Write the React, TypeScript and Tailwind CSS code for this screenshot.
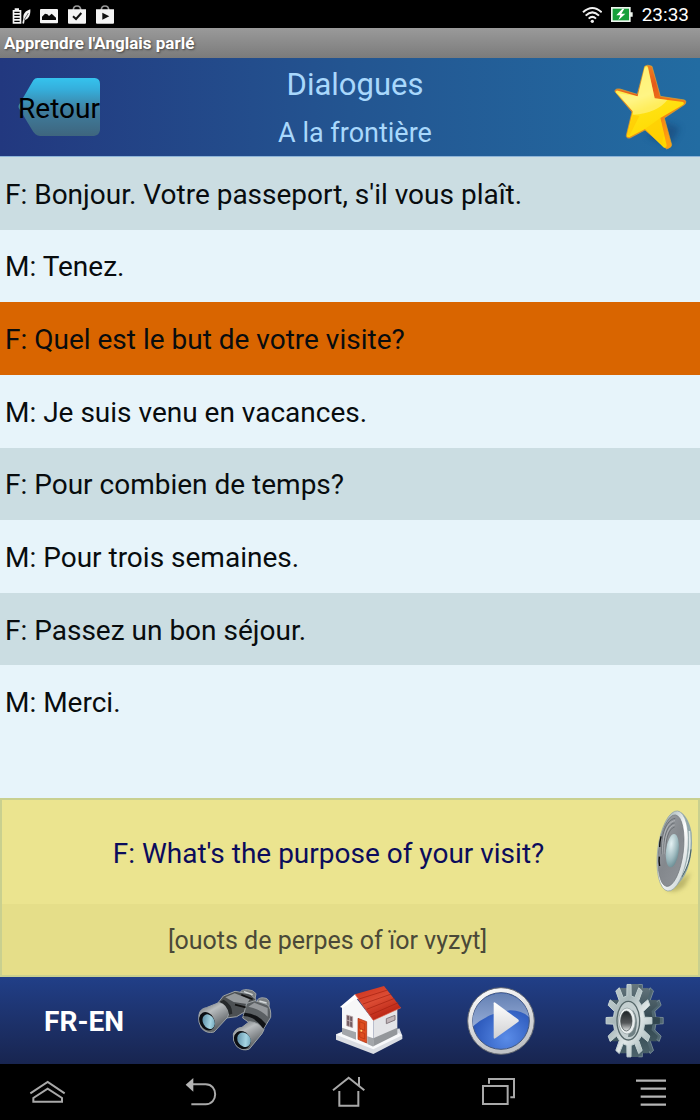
import React, { useState } from "react";

type Line = { source: string; target: string; phonetic: string };

const lines: Line[] = [
  { source: "F: Bonjour. Votre passeport, s'il vous plaît.", target: "F: Hello. Your passport, please.", phonetic: "" },
  { source: "M: Tenez.", target: "M: Here you are.", phonetic: "" },
  {
    source: "F: Quel est le but de votre visite?",
    target: "F: What's the purpose of your visit?",
    phonetic: "[ouots de perpes of ïor vyzyt]",
  },
  { source: "M: Je suis venu en vacances.", target: "M: I'm here on holiday.", phonetic: "" },
  { source: "F: Pour combien de temps?", target: "F: For how long?", phonetic: "" },
  { source: "M: Pour trois semaines.", target: "M: For three weeks.", phonetic: "" },
  { source: "F: Passez un bon séjour.", target: "F: Enjoy your stay.", phonetic: "" },
  { source: "M: Merci.", target: "M: Thank you.", phonetic: "" },
];

function gearPath(cx: number, cy: number) {
  const points: string[] = [];
  const add = (deg: number, rx: number, ry: number) => {
    const a = (deg * Math.PI) / 180;
    points.push(`${(cx + rx * Math.cos(a)).toFixed(1)} ${(cy + ry * Math.sin(a)).toFixed(1)}`);
  };
  for (let i = 0; i < 12; i++) {
    const a = i * 30;
    add(a - 8, 47, 75);
    add(a - 5, 69, 109);
    add(a + 5, 69, 109);
    add(a + 8, 47, 75);
  }
  return `M${points.join("L")}Z`;
}

function StatusBar() {
  return (
    <div className="flex h-7 items-center justify-between bg-black pr-[11px] pl-[11px] text-white">
      <div className="flex items-center gap-2 pt-px">
        <svg className="size-5" viewBox="33 12 60 60" aria-hidden="true">
          <path d="M44 22h13v5h7v41H38V27h6z" fill="#f4f4f4" />
          <path d="M43 34h16M43 43h16M43 52h16M43 61h16" stroke="#000" strokeWidth="4" />
          <path d="M91 25c-15 5-22 13-21 27l-3 15 5 1 2-11c13-3 18-15 17-32z" fill="#f4f4f4" />
          <path d="M85 36 72 57" stroke="#222" strokeWidth="2" />
        </svg>
        <svg className="size-5" viewBox="117 12 60 60" aria-hidden="true">
          <rect x="120" y="24" width="54" height="43" rx="3" fill="#f4f4f4" />
          <path d="M126 57V47l9-9 7 2 5 5 8-7 13 12v7z" fill="#080808" />
        </svg>
        <svg className="size-5" viewBox="201 12 60 60" aria-hidden="true">
          <path d="M220 27c0-16 22-16 22 0" fill="none" stroke="#999" strokeWidth="5" />
          <path d="M204 25h54v40q0 3-3 3h-48q-3 0-3-3z" fill="#f4f4f4" />
          <path d="m219 46 9 8 16-18" fill="none" stroke="#111" strokeWidth="6" />
        </svg>
        <svg className="size-5" viewBox="285 12 60 60" aria-hidden="true">
          <path d="M304 27c0-16 22-16 22 0" fill="none" stroke="#999" strokeWidth="5" />
          <path d="M288 25h54v40q0 3-3 3h-48q-3 0-3-3z" fill="#f4f4f4" />
          <path d="m307 35 21 11-21 10z" fill="#111" />
        </svg>
      </div>
      <div className="flex items-center gap-[9px]">
        <svg className="size-5" viewBox="66 12 60 60" fill="none" stroke="#f0f0f0" strokeWidth="6" aria-hidden="true">
          <path d="M69 37q28-26 56 0M77 47q20-20 40 0M86 56q11-11 22 0" />
          <circle cx="97" cy="64" r="5" fill="#f0f0f0" stroke="none" />
        </svg>
        <svg className="h-5 w-[22px]" viewBox="156 12 66 60" aria-hidden="true">
          <path d="M156 21h59v16h6v13h-6v16h-59z" fill="#eef5ee" />
          <path d="M161 26h49v35h-49z" fill="#16a03b" />
          <path d="m190 26-18 20h12l-6 15 21-20h-12l9-15z" fill="#fff" />
        </svg>
        <time className="text-[19px] leading-none">23:33</time>
      </div>
    </div>
  );
}

function Star() {
  return (
    <svg className="h-[92px] w-20" viewBox="60 15 240 276" aria-hidden="true">
      <defs>
        <linearGradient id="starFace" x1="0" y1="0" x2="0.3" y2="1">
          <stop offset="0" stopColor="#ffe838" />
          <stop offset="0.45" stopColor="#fff05a" />
          <stop offset="0.6" stopColor="#ffe212" />
          <stop offset="1" stopColor="#ffd800" />
        </linearGradient>
        <linearGradient id="starSide" x1="0" y1="0" x2="0.5" y2="1">
          <stop offset="0" stopColor="#f9a52a" />
          <stop offset="0.4" stopColor="#e55a1a" />
          <stop offset="1" stopColor="#ffa010" />
        </linearGradient>
        <filter id="starBlur" x="-30%" y="-30%" width="160%" height="160%">
          <feGaussianBlur stdDeviation="9" />
        </filter>
      </defs>
      <path d="M215 195 270 215 255 245 235 270 170 240z" fill="#123f70" opacity="0.5" filter="url(#starBlur)" />
      <path
        d="M164 31Q172 24 186 31L211 121 284 132Q291 136 285 145L223 186 245 266Q246 274 230 279L165 222 120 246Q108 248 109 238L126 168 75 107Q73 97 90 99L142 115z"
        fill="url(#starSide)"
        stroke="#d9a830"
        strokeWidth="2"
        strokeLinejoin="round"
      />
      <path
        d="M164 33Q171 27 174 34L194 127 279 138Q285 142 278 147L211 186 230 268Q229 279 220 274L165 219 119 243Q109 245 111 236L128 166 77 109Q76 103 84 104L143 121z"
        fill="url(#starFace)"
      />
      <path d="M143 121 164 36Q171 30 174 38L194 127 232 132Q200 172 130 176L128 166 84 112z" fill="#fffbb8" opacity="0.45" />
      <path d="M165 219 211 186 222 238Q215 255 218 268z" fill="#ffc800" opacity="0.5" />
      <path d="M111 236 128 176 148 180 119 238z" fill="#ffc400" opacity="0.5" />
    </svg>
  );
}

function Header() {
  return (
    <header className="flex h-[99px] items-center justify-between border-b border-[#8db4d8] bg-linear-to-r from-[#22387f] via-[#235591] to-[#226ca2] pr-[10px] pl-[18px]">
      <button type="button" className="relative flex h-[58px] w-[82px] items-center justify-center pt-1 text-[28px] text-black">
        <svg className="absolute inset-0 size-full" viewBox="54 66 246 174" aria-hidden="true">
          <defs>
            <linearGradient id="backFill" x1="0" y1="0" x2="0" y2="1">
              <stop offset="0" stopColor="#35c3ee" />
              <stop offset="0.2" stopColor="#35aedb" />
              <stop offset="0.55" stopColor="#3f7e9e" />
              <stop offset="1" stopColor="#3e657e" />
            </linearGradient>
          </defs>
          <path d="M112 66H284q16 2 16 18V222q-2 16-18 18H120q-15-1-24-19L56 155q-2-5 2-10L100 73q5-7 12-7z" fill="url(#backFill)" />
        </svg>
        <span className="relative">Retour</span>
      </button>
      <div className="pt-1 text-center text-[#a9d8fc]">
        <h1 className="text-[31px] leading-[49px]">Dialogues</h1>
        <h2 className="text-[27px] leading-[49px]">A la frontière</h2>
      </div>
      <button type="button" aria-label="Favori">
        <Star />
      </button>
    </header>
  );
}

function Speaker() {
  return (
    <svg className="h-[93px] w-10" viewBox="75 45 120 279" aria-hidden="true">
      <defs>
        <linearGradient id="rim" x1="0" y1="0" x2="1" y2="1">
          <stop offset="0" stopColor="#8fa3a5" />
          <stop offset="0.5" stopColor="#ffffff" />
          <stop offset="1" stopColor="#c4cfd0" />
        </linearGradient>
        <linearGradient id="cone" x1="0" y1="0" x2="1" y2="1">
          <stop offset="0" stopColor="#9da1a5" />
          <stop offset="0.5" stopColor="#84888d" />
          <stop offset="1" stopColor="#8f9398" />
        </linearGradient>
        <radialGradient id="dome" cx="0.35" cy="0.3" r="0.8">
          <stop offset="0" stopColor="#e4f1f3" />
          <stop offset="0.6" stopColor="#9db9be" />
          <stop offset="1" stopColor="#64888f" />
        </radialGradient>
        <filter id="speakerBlur" x="-30%" y="-30%" width="160%" height="160%">
          <feGaussianBlur stdDeviation="6" />
        </filter>
      </defs>
      <path d="M105 290q25 25 60-5l18-40z" fill="#8e8947" opacity="0.5" filter="url(#speakerBlur)" />
      <path d="M145 60q30 12 40 65 5 60-12 108-14 38-45 60l-10-10z" fill="#93a9ab" />
      <path d="M178 120q6 60-10 108l-12 22" fill="none" stroke="#dce6e6" strokeWidth="5" />
      <path d="M183 175q-3 45-28 83" fill="none" stroke="#476064" strokeWidth="3" />
      <ellipse cx="128" cy="180" rx="45" ry="121" fill="url(#rim)" stroke="#8ea1a3" strokeWidth="2" transform="rotate(7 128 180)" />
      <ellipse cx="123" cy="179" rx="37" ry="108" fill="url(#cone)" stroke="#70757a" strokeWidth="2" transform="rotate(7 123 179)" />
      <path d="M96 190C90 130 110 85 136 82M102 192C98 140 112 98 134 96M108 190C104 150 116 112 134 108" fill="none" stroke="#5b6065" strokeWidth="2" />
      <path d="M99 191C94 135 111 92 135 89M105 191C101 145 114 105 134 102" fill="none" stroke="#bfc2c5" strokeWidth="2" />
      <path d="M89 168q0-16 4-32M89 225q-3-16-1-28" stroke="#111" strokeWidth="4" fill="none" />
      <ellipse cx="127" cy="179" rx="19" ry="50" fill="url(#dome)" transform="rotate(7 127 179)" />
    </svg>
  );
}

function Binoculars() {
  return (
    <svg className="h-[67px] w-20" viewBox="45 35 240 201" aria-hidden="true">
      <defs>
        <linearGradient id="barrel" x1="0.2" y1="0" x2="0.8" y2="1">
          <stop offset="0" stopColor="#6a6e71" />
          <stop offset="0.3" stopColor="#b9bdbf" />
          <stop offset="0.6" stopColor="#85898c" />
          <stop offset="1" stopColor="#3c4043" />
        </linearGradient>
        <linearGradient id="lens" x1="0" y1="0" x2="1" y2="1">
          <stop offset="0" stopColor="#4d7f99" />
          <stop offset="0.6" stopColor="#a5d4e2" />
          <stop offset="1" stopColor="#5b90a8" />
        </linearGradient>
      </defs>
      <g stroke="#9da3a6" strokeWidth="3" strokeLinejoin="round">
        <path d="M180 52q4-10 22-9 18 0 26 12l-4 22-30-4zM232 74q8-10 26-5 14 6 8 28l-30-6z" fill="#7a7f82" />
        <path d="M112 85 130 62 165 48l45 8 18 16-10 26-28 14-20 12-30 4z" fill="#4c5053" />
        <path d="M200 84 225 76 262 88q12 10 10 38l-22 36-42-20-20-14z" fill="#5b6063" />
        <path d="M57 118q3-18 22-21l40-16q24 6 28 32l-5 14-40 43q-22 6-38-12-11-17-7-40z" fill="url(#barrel)" />
        <path d="M160 176q6-18 26-20l22-17q30 2 44 24l-6 12-38 46q-20 8-38-8-13-16-10-37z" fill="url(#barrel)" />
      </g>
      <path d="M118 80q25 8 29 38l10-3q0-28-26-42z" fill="#26292b" />
      <path d="M190 122q34 0 60 38l8-14q-22-30-64-34z" fill="#111315" />
      <path d="m136 66 28-12 45 18-8 14-40-6zM205 94l18-12 40 16v26q-22-22-58-30z" fill="#95999c" />
      <path d="m184 58 34 14M165 88l32 8" stroke="#111" strokeWidth="5" />
      <path d="m192 49 26 9M238 77l22 6" stroke="#d4d9da" strokeWidth="4" />
      <ellipse cx="81" cy="138" rx="22" ry="29" fill="#0b0e12" transform="rotate(-28 81 138)" />
      <ellipse cx="86" cy="139" rx="17" ry="23" fill="url(#lens)" transform="rotate(-28 86 139)" />
      <ellipse cx="187" cy="194" rx="24" ry="28" fill="#0b0e12" transform="rotate(-35 187 194)" />
      <ellipse cx="192" cy="193" rx="19" ry="23" fill="url(#lens)" transform="rotate(-35 192 193)" />
    </svg>
  );
}

function House() {
  return (
    <svg className="h-[71px] w-[72px]" viewBox="36 30 216 213" aria-hidden="true">
      <defs>
        <linearGradient id="roof" x1="0" y1="0" x2="0.6" y2="1">
          <stop offset="0" stopColor="#c9301b" />
          <stop offset="0.5" stopColor="#dc4c34" />
          <stop offset="1" stopColor="#b41f10" />
        </linearGradient>
      </defs>
      <path d="M48 178 66 170 160 195 238 160 247 182 247 192 160 237 48 194z" fill="#dadde3" />
      <path d="M48 179 66 172 160 212 236 174 247 181 160 223z" fill="#f8f9fb" />
      <path d="M66 96 106 66 160 136V214L66 177z" fill="#f7f7f8" />
      <path d="M160 134 232 100V178L160 214z" fill="#e3e4e7" />
      <path d="M66 158 108 172V194L66 177zM142 184l18 6v25l-18-8z" fill="#a3a6aa" />
      <path d="M160 190 232 158V178L160 214z" fill="#94979b" />
      <path d="M60 96 106 57 120 72 106 72 68 99z" fill="#fff" />
      <path d="M105 58 192 33 243 98 160 136z" fill="url(#roof)" />
      <path d="m117 72 86-27M129 87l85-30M140 103l84-33M150 120l85-37" stroke="#a3200f" strokeWidth="2" fill="none" />
      <path d="M105 58 160 136 243 98" fill="none" stroke="#e2654b" strokeWidth="2" />
      <path d="M80 120 98 125V158L80 152z" fill="#735c62" stroke="#bba8ab" strokeWidth="2" />
      <path d="M89 123v32M80 135l18 6" stroke="#d6c9cc" strokeWidth="2" />
      <path d="M114 130 140 140V204L114 193z" fill="#df4d20" stroke="#a72c0c" strokeWidth="2" />
      <path d="m119 140 15 6v20l-15-6zM119 170l15 6v16l-15-6z" fill="none" stroke="#b23510" strokeWidth="2" />
      <circle cx="124" cy="167" r="3" fill="#ffd873" />
      <path d="M199 131 225 121V135L199 146z" fill="#c1b5b9" stroke="#857a7f" strokeWidth="3" />
    </svg>
  );
}

function Play() {
  return (
    <svg className="size-[68px]" viewBox="34 34 204 204" aria-hidden="true">
      <defs>
        <linearGradient id="playRing" x1="0" y1="0" x2="0.3" y2="1">
          <stop offset="0" stopColor="#ffffff" />
          <stop offset="1" stopColor="#c0c2c6" />
        </linearGradient>
        <linearGradient id="playTop" x1="0" y1="0" x2="0" y2="1">
          <stop offset="0" stopColor="#6480b3" />
          <stop offset="1" stopColor="#94abd6" />
        </linearGradient>
        <radialGradient id="playLow" cx="0.6" cy="0.8" r="0.65">
          <stop offset="0" stopColor="#5a8ce8" />
          <stop offset="1" stopColor="#2753b6" />
        </radialGradient>
        <linearGradient id="playArrow" x1="0" y1="0" x2="0" y2="1">
          <stop offset="0" stopColor="#ffffff" />
          <stop offset="1" stopColor="#d0d0d2" />
        </linearGradient>
      </defs>
      <circle cx="136" cy="136" r="100" fill="url(#playRing)" stroke="#60656f" strokeWidth="3" />
      <circle cx="136" cy="136" r="85" fill="url(#playLow)" stroke="#45597e" strokeWidth="3" />
      <path d="M52 152A85 85 0 0 1 220 124Q190 98 145 106 95 115 52 152z" fill="url(#playTop)" />
      <path d="M114 83q0-5 5-2l68 50q5 4 0 8l-68 49q-5 3-5-3z" fill="url(#playArrow)" />
    </svg>
  );
}

function Gear() {
  return (
    <svg className="h-[76px] w-[60px]" viewBox="40 22 180 228" aria-hidden="true">
      <defs>
        <linearGradient id="gearFace" x1="0" y1="0" x2="1" y2="1">
          <stop offset="0" stopColor="#c8d4d5" />
          <stop offset="0.35" stopColor="#a9b8ba" />
          <stop offset="0.6" stopColor="#e0e7e7" />
          <stop offset="1" stopColor="#93a9ac" />
        </linearGradient>
        <linearGradient id="gearSide" x1="0" y1="0" x2="0" y2="1">
          <stop offset="0" stopColor="#66777e" />
          <stop offset="0.5" stopColor="#2f444d" />
          <stop offset="1" stopColor="#4c636c" />
        </linearGradient>
        <linearGradient id="gearHole" x1="0" y1="0" x2="0" y2="1">
          <stop offset="0" stopColor="#1d2326" />
          <stop offset="0.6" stopColor="#55585a" />
          <stop offset="1" stopColor="#e4e7e7" />
        </linearGradient>
      </defs>
      {[34, 30, 26, 22, 18, 14, 10, 6].map((dx) => (
        <path key={dx} d={gearPath(115 + dx, 135)} fill="url(#gearSide)" />
      ))}
      <path d={gearPath(149, 135)} fill="#4f6670" stroke="#8c9fa8" strokeWidth="2" />
      {[24, 20, 16, 12, 8, 4].map((dx) => (
        <path key={dx} d={gearPath(115 + dx, 135)} fill="url(#gearSide)" />
      ))}
      <path d={gearPath(115, 135)} fill="url(#gearFace)" stroke="#c4d2d3" strokeWidth="3" strokeLinejoin="round" />
      <ellipse cx="113" cy="135" rx="34" ry="58" fill="#c5d0d1" stroke="#566769" strokeWidth="4" />
      <path d="M126 102q20 24 8 70-8 14-22 12z" fill="#6f8083" />
      <ellipse cx="109" cy="136" rx="25" ry="39" fill="#e9eeee" stroke="#899799" strokeWidth="2" />
      <ellipse cx="107" cy="136" rx="17" ry="30" fill="url(#gearHole)" stroke="#3c4547" strokeWidth="2" />
    </svg>
  );
}

function NavBar() {
  const button = "flex h-10 w-[60px] items-center justify-center";
  const icon = "h-10 w-[60px]";
  return (
    <nav aria-label="Système" className="flex h-14 items-center justify-between bg-black pr-[19px] pl-[17px]">
      <button type="button" className={button} aria-label="Applications">
        <svg className={icon} viewBox="51 36 180 120" fill="none" stroke="#a9a9a9" strokeWidth="6">
          <path d="m91 100 52-34 51 34" />
          <path d="M100 125V114l43-28 43 28v11z" />
        </svg>
      </button>
      <button type="button" className={button} aria-label="Précédent">
        <svg className={icon} viewBox="504 36 180 120" fill="none" stroke="#a9a9a9" strokeWidth="6">
          <path d="M578 73h39c38 0 38 60 0 60h-43" />
          <path d="M557 74 580 54V95z" fill="#b5b5b5" stroke="none" />
        </svg>
      </button>
      <button type="button" className={button} aria-label="Écran d'accueil">
        <svg className={icon} viewBox="957 36 180 120" fill="none" stroke="#a9a9a9" strokeWidth="6">
          <path d="m999 91 47-38 47 38M1077 51v26M1018 93v44h57V93" />
        </svg>
      </button>
      <button type="button" className={button} aria-label="Applications récentes">
        <svg className={icon} viewBox="360 36 180 120" fill="none" stroke="#a9a9a9" strokeWidth="6">
          <path d="M399 78h74v54h-74zM417 71V57h75v55h-11" />
        </svg>
      </button>
      <button type="button" className={button} aria-label="Options">
        <svg className={icon} viewBox="813 36 180 120" fill="none" stroke="#b5b5b5" strokeWidth="7">
          <path d="M858 62h90M872 86h76M872 110h76M872 134h76" />
        </svg>
      </button>
    </nav>
  );
}

export default function App() {
  const [selected, setSelected] = useState(2);
  const current = lines[selected];
  const tool = "flex flex-1 items-center justify-center";

  return (
    <div className="flex min-h-screen flex-col bg-[#e7f4fa] font-[Roboto,sans-serif]">
      <StatusBar />
      <div className="h-[30px] bg-linear-to-b from-[#9a9a9a] to-[#7b7b7b] px-1 text-[17px] leading-[31px] font-bold text-white text-shadow-[1px_1px_2px_#444]">
        Apprendre l'Anglais parlé
      </div>
      <Header />
      <main className="flex flex-1 flex-col justify-between">
        <ul className="grid h-[581px] auto-rows-fr">
          {lines.map((line, i) => (
            <li key={line.source} className="flex">
              <button
                type="button"
                aria-pressed={i === selected}
                onClick={() => setSelected(i)}
                className={`flex-1 px-[5px] pt-[3px] text-left text-[28px] text-[#080c0e] ${
                  i === selected ? "bg-[#d96500]" : i % 2 === 0 ? "bg-[#cbdde2]" : "bg-[#e7f4fa]"
                }`}
              >
                {line.source}
              </button>
            </li>
          ))}
        </ul>
        <section aria-label="Traduction" className="border-2 border-[#c9d08f] bg-[#ebe48f]">
          <div className="flex h-[104px] items-center pr-[3px]">
            <p className="flex-1 pt-[3px] text-center text-[28px] text-[#0b0c5c]">{current.target}</p>
            <button type="button" aria-label="Écouter">
              <Speaker />
            </button>
          </div>
          <p className="h-[71px] bg-[#e5de89] pr-[45px] text-center text-[25px] leading-[74px] text-[#4a4938]">
            {current.phonetic}
          </p>
        </section>
      </main>
      <footer>
        <div className="flex h-[87px] bg-linear-to-b from-[#213f88] to-[#182550]">
          <button type="button" className="w-[24%] pt-[3px] text-[28px] font-bold text-white">
            FR-EN
          </button>
          <button type="button" className={tool} aria-label="Rechercher">
            <Binoculars />
          </button>
          <button type="button" className={tool} aria-label="Accueil">
            <House />
          </button>
          <button type="button" className={tool} aria-label="Lecture">
            <Play />
          </button>
          <button type="button" className={tool} aria-label="Réglages">
            <Gear />
          </button>
        </div>
        <NavBar />
      </footer>
    </div>
  );
}
